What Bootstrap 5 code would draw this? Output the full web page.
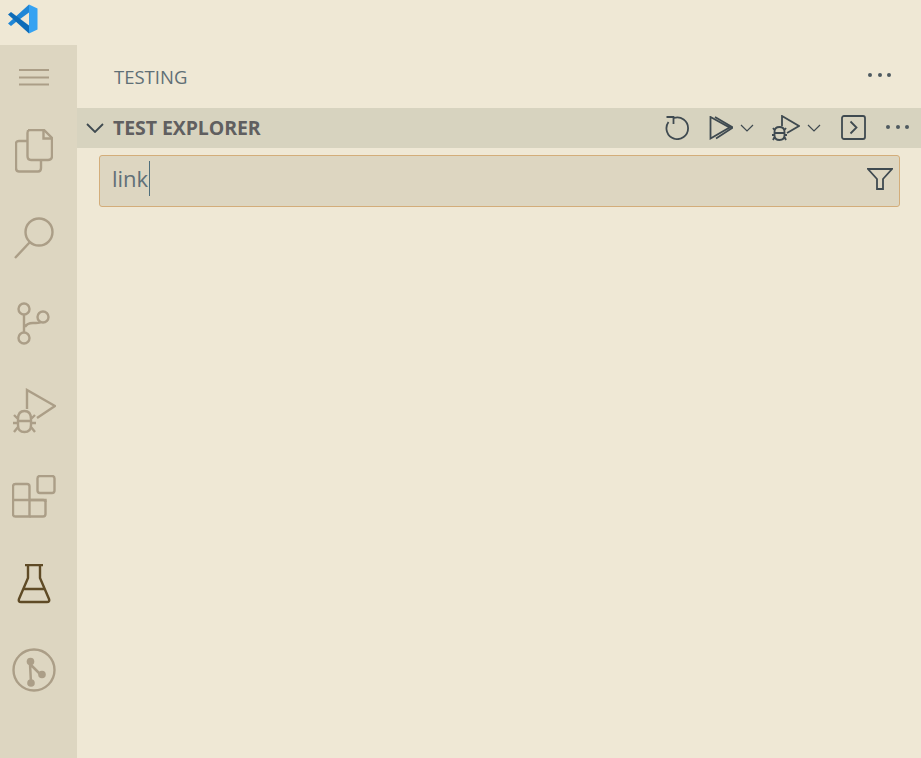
<!DOCTYPE html>
<html lang="en">
<head>
    <meta charset="UTF-8">
    <title>Testing</title>
    <link href="https://cdn.jsdelivr.net/npm/bootstrap@5.3.3/dist/css/bootstrap.min.css" rel="stylesheet">
    <style>
        html, body { height: 100%; }
        body { background: #efe8d5; font-family: "Open Sans", "Noto Sans", sans-serif; overflow: hidden; }
        svg { display: block; fill: none; flex: none; }
        .title-strip { height: 45px; padding-left: 7px; padding-top: 4px; }
        .work-area { height: calc(100vh - 45px); }
        .activity-bar { width: 77px; background: #ddd6c1; }
        .act-item { width: 67px; height: 86.5px; display: flex; justify-content: center; align-items: center; }
        .act-first { height: 63px; }
        .act-item svg { stroke: #ab9e87; stroke-width: 2.4; }
        .act-active svg { stroke: #5f4b26; }
        .side-pane { min-width: 0; }
        .pane-title { height: 63px; padding: 0 30px 0 37px; color: #5f6f76; font-size: 18.5px; }
        .more-dots { display: flex; gap: 5.5px; margin-bottom: 3px; }
        .more-dots i { width: 4px; height: 4px; border-radius: 50%; background: #4f5a60; }
        .section-bar { height: 40px; background: #d7d3bf; padding-left: 9px; padding-right: 12px; }
        .section-name { color: #605f60; font-size: 19.5px; font-weight: 700; margin-left: 9px; letter-spacing: -.08px; }
        .tool-row svg { stroke: #3f4a50; stroke-width: 1.8; }
        .filter-box { height: 52px; margin: 7px 21px 0 22px; padding: 0 6px 5px 12px; background: #ddd6c1; border: 1px solid #d3ad7a; border-radius: 3px; color: #607078; font-size: 22px; }
        .caret-bar { width: 1px; height: 35px; background: #4f6f7c; margin-left: 1px; }
        .gap-20 { margin-right: 20px; }
        .gap-18 { margin-right: 18px; }
        .gap-7 { margin-right: 7px; }
    </style>
</head>
<body>

<div class="title-strip">
    <svg width="31" height="30" viewBox="0 0 31 30">
        <path d="M22 .5 30.500 4.500V25.500L22 29.500Z" fill="#35a2f2"/>
        <path d="M22 .5V8.500L9 18 4 22 1 19.500 22 .5Z" fill="#1f86d6"/>
        <path d="M1 10.500 4 8 22 21.500V29.500L1 10.500Z" fill="#0e6cb8"/>
    </svg>
</div>

<div class="d-flex work-area">
    <!-- activity bar -->
    <div class="activity-bar d-flex flex-column">
        <div class="act-item act-first">
            <svg width="30" height="18" viewBox="0 0 30 18" style="stroke-width: 2"><path d="M0 2H30M0 9.500H30M0 16.500H30"/></svg>
        </div>
        <div class="act-item">
            <svg width="38" height="44" viewBox="0 0 38 44">
                <path d="M13 1H29L37 9V27Q37 31 33 31H16Q12.500 31 12.500 27V4Q12.500 1 15 1Z"/>
                <path d="M28.500 1V9.500H37"/>
                <path d="M12 12H4Q1 12 1 15V39Q1 42.500 4 42.500H23Q26 42.500 26 39V31.500"/>
            </svg>
        </div>
        <div class="act-item">
            <svg width="42" height="44" viewBox="0 0 42 44">
                <circle cx="26" cy="16" r="13.500"/>
                <path d="M17 26 2 42"/>
            </svg>
        </div>
        <div class="act-item">
            <svg width="34" height="44" viewBox="0 0 34 44">
                <circle cx="7" cy="7" r="5.500"/>
                <circle cx="7" cy="36" r="5.500"/>
                <circle cx="26" cy="15" r="5.500"/>
                <path d="M7 13V30M8 25 Q10 21 16 21H19Q23 21 24 20"/>
            </svg>
        </div>
        <div class="act-item">
            <svg width="44" height="46" viewBox="0 0 44 46">
                <path d="M15 21V2L43 18 25 30"/>
                <path d="M6 31Q6 23 12.500 23T19 31V37Q19 44 12.500 44T6 37ZM6 33H19M6 31 2 27M19 31 23 27M6 35H1M19 35H24M6 39 2 44M19 39 23 44"/>
            </svg>
        </div>
        <div class="act-item">
            <svg width="44" height="44" viewBox="0 0 44 44">
                <rect x="25.500" y="1" width="17" height="17" rx="2.500"/>
                <path d="M3.500 9H15Q17.500 9 17.500 11.500V41.500H3.500Q1 41.500 1 39V11.500Q1 9 3.500 9Z"/>
                <path d="M1 25H33.500V39Q33.500 41.500 31 41.500H17.500"/>
                <path d="M17.500 25H31Q33.500 25 33.500 27"/>
            </svg>
        </div>
        <div class="act-item act-active">
            <svg width="34" height="40" viewBox="0 0 34 40">
                <path d="M8 1H26M11 1V14L2 35Q1 38 4 38H30Q33 38 32 35L23 14V1M6.500 25H27.500"/>
            </svg>
        </div>
        <div class="act-item">
            <svg width="44" height="44" viewBox="0 0 44 44">
                <circle cx="22" cy="22" r="20.500"/>
                <path d="M18 16 19 35M18 16 30 28" stroke-width="2.500"/>
                <circle cx="18.500" cy="13.500" r="3.800" fill="#ab9e87" stroke="none"/>
                <circle cx="19" cy="35" r="3.800" fill="#ab9e87" stroke="none"/>
                <circle cx="30" cy="26.500" r="3.800" fill="#ab9e87" stroke="none"/>
            </svg>
        </div>
    </div>

    <!-- side pane -->
    <div class="side-pane flex-grow-1">
        <div class="pane-title d-flex align-items-center justify-content-between">
            <span>TESTING</span>
            <span class="more-dots"><i></i><i></i><i></i></span>
        </div>
        <div class="section-bar d-flex align-items-center tool-row">
            <svg width="18" height="10" viewBox="0 0 18 10"><path d="M1 1 9 9 17 1"/></svg>
            <span class="section-name flex-grow-1">TEST EXPLORER</span>
            <svg width="24" height="24" viewBox="0 0 24 24" class="gap-20"><path d="M9 2A10.800 10.800 0 1 1 3.500 6M1.500 1H8.500V8"/></svg>
            <svg width="24" height="24" viewBox="0 0 24 24" class="gap-7"><path d="M1.500 1V22.500L20.500 11.500ZM6 1 24 11.500 7 22.500"/></svg>
            <svg width="14" height="8" viewBox="0 0 14 8" class="gap-18"><path d="M1 1 7 7 13 1" stroke-width="1.200"/></svg>
            <svg width="28" height="26" viewBox="0 0 28 26" class="gap-7"><path d="M10 11V1L27 11 15 18"/><path d="M2.500 17Q2.500 12 7.500 12T12.500 17V20Q12.500 25 7.500 25T2.500 20ZM2.500 18H12.500M2.500 15 1 13M12.500 15 14 13M2.500 20H0M12.500 20H15M2.500 22 1 25M12.500 22 14 25"/></svg>
            <svg width="14" height="8" viewBox="0 0 14 8" class="gap-20"><path d="M1 1 7 7 13 1" stroke-width="1.200"/></svg>
            <svg width="25" height="27" viewBox="0 0 25 27" class="gap-20"><rect x="1" y="1" width="23" height="23" rx="2"/><path d="M9.500 6.500 15.500 12.500 9.500 18.500"/></svg>
            <span class="more-dots"><i></i><i></i><i></i></span>
        </div>
        <div class="filter-box d-flex align-items-center tool-row">
            <span>link</span><span class="caret-bar"></span>
            <svg width="26" height="22" viewBox="0 0 26 22" class="ms-auto"><path d="M1 1H25L16 11V21H10V11Z"/></svg>
        </div>
    </div>
</div>

</body>
</html>
